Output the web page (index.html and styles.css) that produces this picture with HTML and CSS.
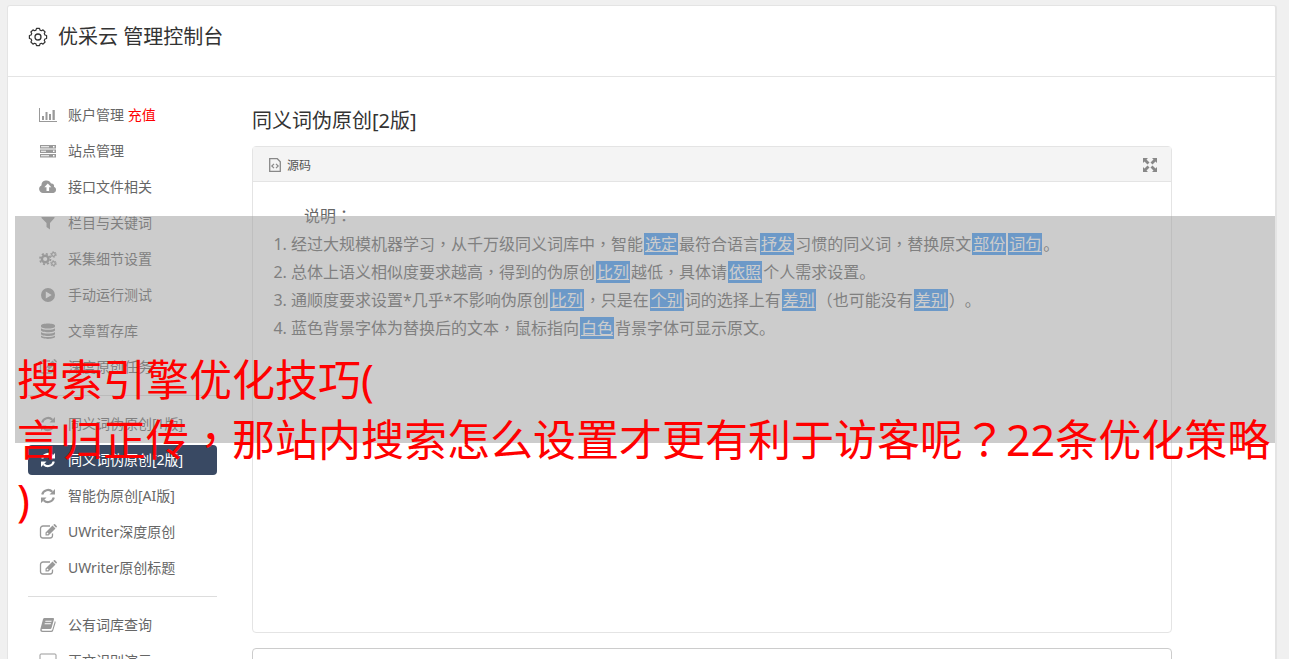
FILE: index.html
```
<!DOCTYPE html>
<html lang="zh-CN">
<head>
    <meta charset="UTF-8">
    <meta name="viewport" content="width=device-width, initial-scale=1.0">
    <title>优采云 管理控制台</title>
    <link rel="stylesheet" href="styles.css">
</head>
<body>
    <!-- Shared icons -->
    <svg class="sprite" aria-hidden="true">
        <symbol id="icon-refresh" viewBox="0 0 16 16">
            <path d="M2.200 6.500A6 6 0 0 1 12.300 3.800M13.800 9.500A6 6 0 0 1 3.700 12.200" fill="none" stroke="currentColor" stroke-width="2.200"/>
            <path d="M15 1v5.500H9.500zM1 15V9.500h5.500z"/>
        </symbol>
        <symbol id="icon-edit" viewBox="0 0 18 16">
            <path d="M11 2H4a2.500 2.500 0 0 0-2.500 2.500v7A2.500 2.500 0 0 0 4 14h7a2.500 2.500 0 0 0 2.500-2.500V9.500" fill="none" stroke="currentColor" stroke-width="1.300"/>
            <path d="M6.500 8.500l7-7 3 3-7 7h-3zM7.700 9v1.300H9l.6-.6-1.300-1.300zM14.300.9l.6-.6q.6-.5 1.200 0l1.600 1.600q.5.600 0 1.200l-.6.600z" fill-rule="evenodd"/>
        </symbol>
    </svg>

    <div class="page">
        <header class="page-header">
            <svg class="header-icon outline" viewBox="0 0 20 20">
                <path d="M8 3.100L8.500 1.400h3L12 3.100l1.500.6L15 2.900 17.100 5l-.8 1.500.6 1.500 1.700.5v3l-1.700.5-.6 1.500.8 1.500-2.100 2.100-1.500-.8-1.500.6-.5 1.700h-3L8 16.900l-1.500-.6-1.500.8L2.900 15l.8-1.500L3.100 12l-1.700-.5v-3L3.100 8l.6-1.500L2.900 5 5 2.900l1.500.8z" stroke-width="1.200" stroke-linejoin="round"/>
                <circle cx="10" cy="10" r="3" stroke-width="1.300"/>
            </svg>
            <h1>优采云 管理控制台</h1>
        </header>

        <div class="content">
            <nav class="sidebar">
                <a href="#">
                    <svg viewBox="0 0 18 16"><path d="M0 1h1v13h17v1H0zM3 9h2v4H3zM6.500 5h2v8h-2zM10 7h2v6h-2zM13.500 3h2.300v10h-2.300z"/></svg>
                    <span>账户管理 <em>充值</em></span>
                </a>
                <a href="#">
                    <svg viewBox="0 0 18 16"><path d="M1 2h16v3.500H1zM1 6.500h16V10H1zM1 11h16v3.500H1zM2 3.300v1h8v-1zM2 7.800v1h5v-1zM2 12.300v1h8v-1zM14 3v1.500h1.500V3zM14 7.500V9h1.500V7.500zM14 12v1.500h1.500V12z" fill-rule="evenodd"/></svg>
                    <span>站点管理</span>
                </a>
                <a href="#">
                    <svg viewBox="0 0 18 16"><path d="M4 14a4 4 0 0 1-1.600-7.600A5 5 0 0 1 12 4.500a2.500 2.500 0 0 1 3 3.200A3.300 3.300 0 0 1 14.500 14zM8.800 4.500L5.300 8.200h2.200V12h2.600V8.200h2.200z" fill-rule="evenodd"/></svg>
                    <span>接口文件相关</span>
                </a>
                <a href="#">
                    <svg viewBox="0 0 18 16"><path d="M2.500 2h13v1L11 8v6.500L7.500 12V8l-5-5z"/></svg>
                    <span>栏目与关键词</span>
                </a>
                <a href="#">
                    <svg class="outline" viewBox="0 0 18 16">
                        <circle cx="6.200" cy="8" r="3.300" stroke-width="2.400"/>
                        <circle cx="6.200" cy="8" r="5.300" stroke-width="1.700" stroke-dasharray="2.100 2.060"/>
                        <circle cx="14.500" cy="3.500" r="1.800" stroke-width="1.300"/>
                        <circle cx="14.500" cy="3.500" r="2.800" stroke-dasharray="1.400 1.530"/>
                        <circle cx="14.500" cy="12.500" r="1.800" stroke-width="1.300"/>
                        <circle cx="14.500" cy="12.500" r="2.800" stroke-dasharray="1.400 1.530"/>
                    </svg>
                    <span>采集细节设置</span>
                </a>
                <a href="#">
                    <svg viewBox="0 0 18 16"><path d="M9 1a7 7 0 1 1 0 14A7 7 0 0 1 9 1zM6.800 4.500v7L12.700 8z" fill-rule="evenodd"/></svg>
                    <span>手动运行测试</span>
                </a>
                <a href="#">
                    <svg viewBox="0 0 18 16"><path d="M2 2.500C2-.3 16-.3 16 2.500v1c0 2.700-14 2.700-14 0zM2 5.300c2 2 12 2 14 0v2c0 2.600-14 2.600-14 0zM2 9c2 2 12 2 14 0v2c0 2.600-14 2.600-14 0zM2 12.600c2 2 12 2 14 0v1.200c0 2.800-14 2.800-14 0z"/></svg>
                    <span>文章暂存库</span>
                </a>
                <a href="#">
                    <svg><use href="#icon-edit"/></svg>
                    <span>深度原创任务</span>
                </a>
                <hr>
                <a href="#">
                    <svg><use href="#icon-refresh"/></svg>
                    <span>同义词伪原创[1版]</span>
                </a>
                <a href="#" class="active">
                    <svg><use href="#icon-refresh"/></svg>
                    <span>同义词伪原创[2版]</span>
                </a>
                <a href="#">
                    <svg><use href="#icon-refresh"/></svg>
                    <span>智能伪原创[AI版]</span>
                </a>
                <a href="#">
                    <svg><use href="#icon-edit"/></svg>
                    <span>UWriter深度原创</span>
                </a>
                <a href="#">
                    <svg><use href="#icon-edit"/></svg>
                    <span>UWriter原创标题</span>
                </a>
                <hr>
                <a href="#">
                    <svg viewBox="0 0 18 16"><path d="M5.500 1H14q1.300 0 1 1.300L12.500 11q-.3 1-1.300 1H3.500q-1 0-.9.800.1.900 1.200.9H12q1 0 1.300-1L15.900 4q1 .6.700 1.700L14.200 13.500q-.4 1.500-2 1.500H3.600Q.7 15 1.400 12L4 2.300Q4.400 1 5.500 1zM6.500 3.700l-.3 1h6.200l.3-1zM5.800 6.200l-.3 1h6.200l.3-1z" fill-rule="evenodd"/></svg>
                    <span>公有词库查询</span>
                </a>
                <a href="#">
                    <svg class="outline" viewBox="0 0 18 16"><rect x="1" y="1" width="16" height="11" rx="1"/><path d="M5 15h8M9 12v3"/></svg>
                    <span>正文识别演示</span>
                </a>
            </nav>

            <main class="main">
                <h2>同义词伪原创[2版]</h2>

                <section class="editor">
                    <div class="editor-toolbar">
                        <button type="button" class="source-button">
                            <svg class="outline" viewBox="0 0 12 14"><path d="M.7.700h7.600l3 3v9.600H.7z" stroke-width="1.300"/><path d="M5 5.800L2.800 8 5 10.200M7 5.800L9.200 8 7 10.200" stroke-width="1.200"/></svg>
                            源码
                        </button>
                        <button type="button" class="fullscreen-button" aria-label="全屏">
                            <svg viewBox="0 0 14 14"><path d="M0 0h5L3.500 1.500l3 3-2 2-3-3L0 5zM14 0v5l-1.500-1.500-3 3-2-2 3-3L9 0zM0 14V9l1.500 1.500 3-3 2 2-3 3L5 14zM14 14H9l1.500-1.500-3-3 2-2 3 3L14 9z"/></svg>
                        </button>
                    </div>
                    <div class="editor-body">
                        <p>说明<span class="mark">：</span></p>
                        <ol>
                            <li>经过大规模机器学习<span class="mark">，</span>从千万级同义词库中<span class="mark">，</span>智能<a href="#">选定</a>最符合语言<a href="#">抒发</a>习惯的同义词<span class="mark">，</span>替换原文<a href="#">部份</a><a href="#">词句</a>。</li>
                            <li>总体上语义相似度要求越高<span class="mark">，</span>得到的伪原创<a href="#">比列</a>越低<span class="mark">，</span>具体请<a href="#">依照</a>个人需求设置。</li>
                            <li>通顺度要求设置*几乎*不影响伪原创<a href="#">比列</a><span class="mark">，</span>只是在<a href="#">个别</a>词的选择上有<a href="#">差别</a><span class="mark">（</span>也可能没有<a href="#">差别</a><span class="mark">）</span>。</li>
                            <li>蓝色背景字体为替换后的文本<span class="mark">，</span>鼠标指向<a href="#">白色</a>背景字体可显示原文。</li>
                        </ol>
                    </div>
                </section>

                <div class="result-box"></div>
            </main>
        </div>
    </div>

    <div class="banner">
        <div class="banner-text">搜索引擎优化技巧(<br>言归正传<span class="mark">，</span>那站内搜索怎么设置才更有利于访客呢<span class="mark">？</span>22条优化策略<br>)</div>
    </div>
</body>
</html>
```
FILE: styles.css
```
* {
    box-sizing: border-box;
}

body {
    position: relative;
    margin: 0;
    padding: 5px 12px 0 7px;
    background-color: #f0f0f0;
    color: #666;
    font-family: "Noto Sans", "Noto Sans CJK SC", sans-serif;
    font-size: 14px;
    text-spacing-trim: space-all;
}

.sprite {
    position: absolute;
    width: 0;
    height: 0;
}

svg {
    fill: currentColor;
    flex-shrink: 0;
}

.outline {
    fill: none;
    stroke: currentColor;
}

/* Full-width punctuation centred in its cell */
.mark {
    font-family: "Noto Sans CJK TC", sans-serif;
    font-feature-settings: "locl" 0;
    line-height: 1;
}

.page {
    background-color: #fff;
    border: 1px solid #e4e4e4;
    border-right-width: 2px;
    border-radius: 3px;
}

.page-header {
    display: flex;
    align-items: center;
    gap: 10px;
    padding: 16px 20px 24px;
    border-bottom: 1px solid #e4e4e4;
    color: #333;
}

.page-header h1,
.main h2 {
    margin: 0;
    font-size: 20px;
    font-weight: 400;
    line-height: 30px;
    color: #333;
}

.header-icon {
    width: 20px;
    height: 20px;
}

.content {
    display: flex;
    gap: 35px;
    padding: 23px 20px;
}

/* Sidebar */
.sidebar {
    display: flex;
    flex-direction: column;
    gap: 6px;
    flex: 0 0 189px;
}

.sidebar a {
    display: flex;
    align-items: center;
    gap: 10px;
    height: 30px;
    padding: 0 10px;
    border-radius: 4px;
    color: #666;
    line-height: 30px;
    text-decoration: none;
}

.sidebar svg {
    width: 20px;
    height: 16px;
    color: #999;
}

.sidebar em {
    color: #f00;
    font-style: normal;
}

.sidebar .active {
    background-color: #394963;
}

.sidebar .active,
.sidebar .active svg {
    color: #fff;
}

.sidebar hr {
    width: 100%;
    margin: 7px 0;
    border: 0;
    border-top: 1px solid #ddd;
}

/* Main column */
.main {
    flex: 1;
    max-width: 920px;
    padding-top: 6px;
}

.editor {
    margin-top: 10px;
    border: 1px solid #e4e4e4;
    border-radius: 4px;
}

.editor-toolbar {
    display: flex;
    align-items: center;
    justify-content: space-between;
    height: 35px;
    padding: 2px 14px 0 16px;
    background-color: #f4f4f4;
    border-bottom: 1px solid #e4e4e4;
}

.editor-toolbar button {
    display: flex;
    align-items: center;
    gap: 6px;
    padding: 0;
    border: 0;
    background: none;
    color: #555;
    font-family: inherit;
    font-size: 12px;
}

.editor-toolbar svg {
    color: #888;
}

.source-button svg {
    width: 12px;
    height: 14px;
}

.fullscreen-button svg {
    width: 14px;
    height: 14px;
}

.editor-body {
    min-height: 450px;
    padding: 20px 19px;
    font-size: 16px;
    line-height: 28px;
}

.editor-body p {
    margin: 0;
    text-indent: 2em;
}

.editor-body ol {
    margin: 0;
    padding-left: 19px;
}

.editor-body a {
    margin: 0 1px;
    padding: 0 1px;
    background-color: #3f99f7;
    color: #fff;
    line-height: 20px;
}

.result-box {
    height: 120px;
    margin-top: 15px;
    border: 1px solid #ccc;
    border-radius: 4px;
}

/* Banner laid over the page */
.banner {
    position: absolute;
    top: 216px;
    left: 15px;
    right: 14px;
    height: 227px;
    padding: 134px 0 0 2px;
    background-color: rgba(153, 153, 153, 0.5);
}

.banner-text {
    color: #f00;
    font-size: 43px;
    line-height: 60px;
    white-space: nowrap;
}
```
